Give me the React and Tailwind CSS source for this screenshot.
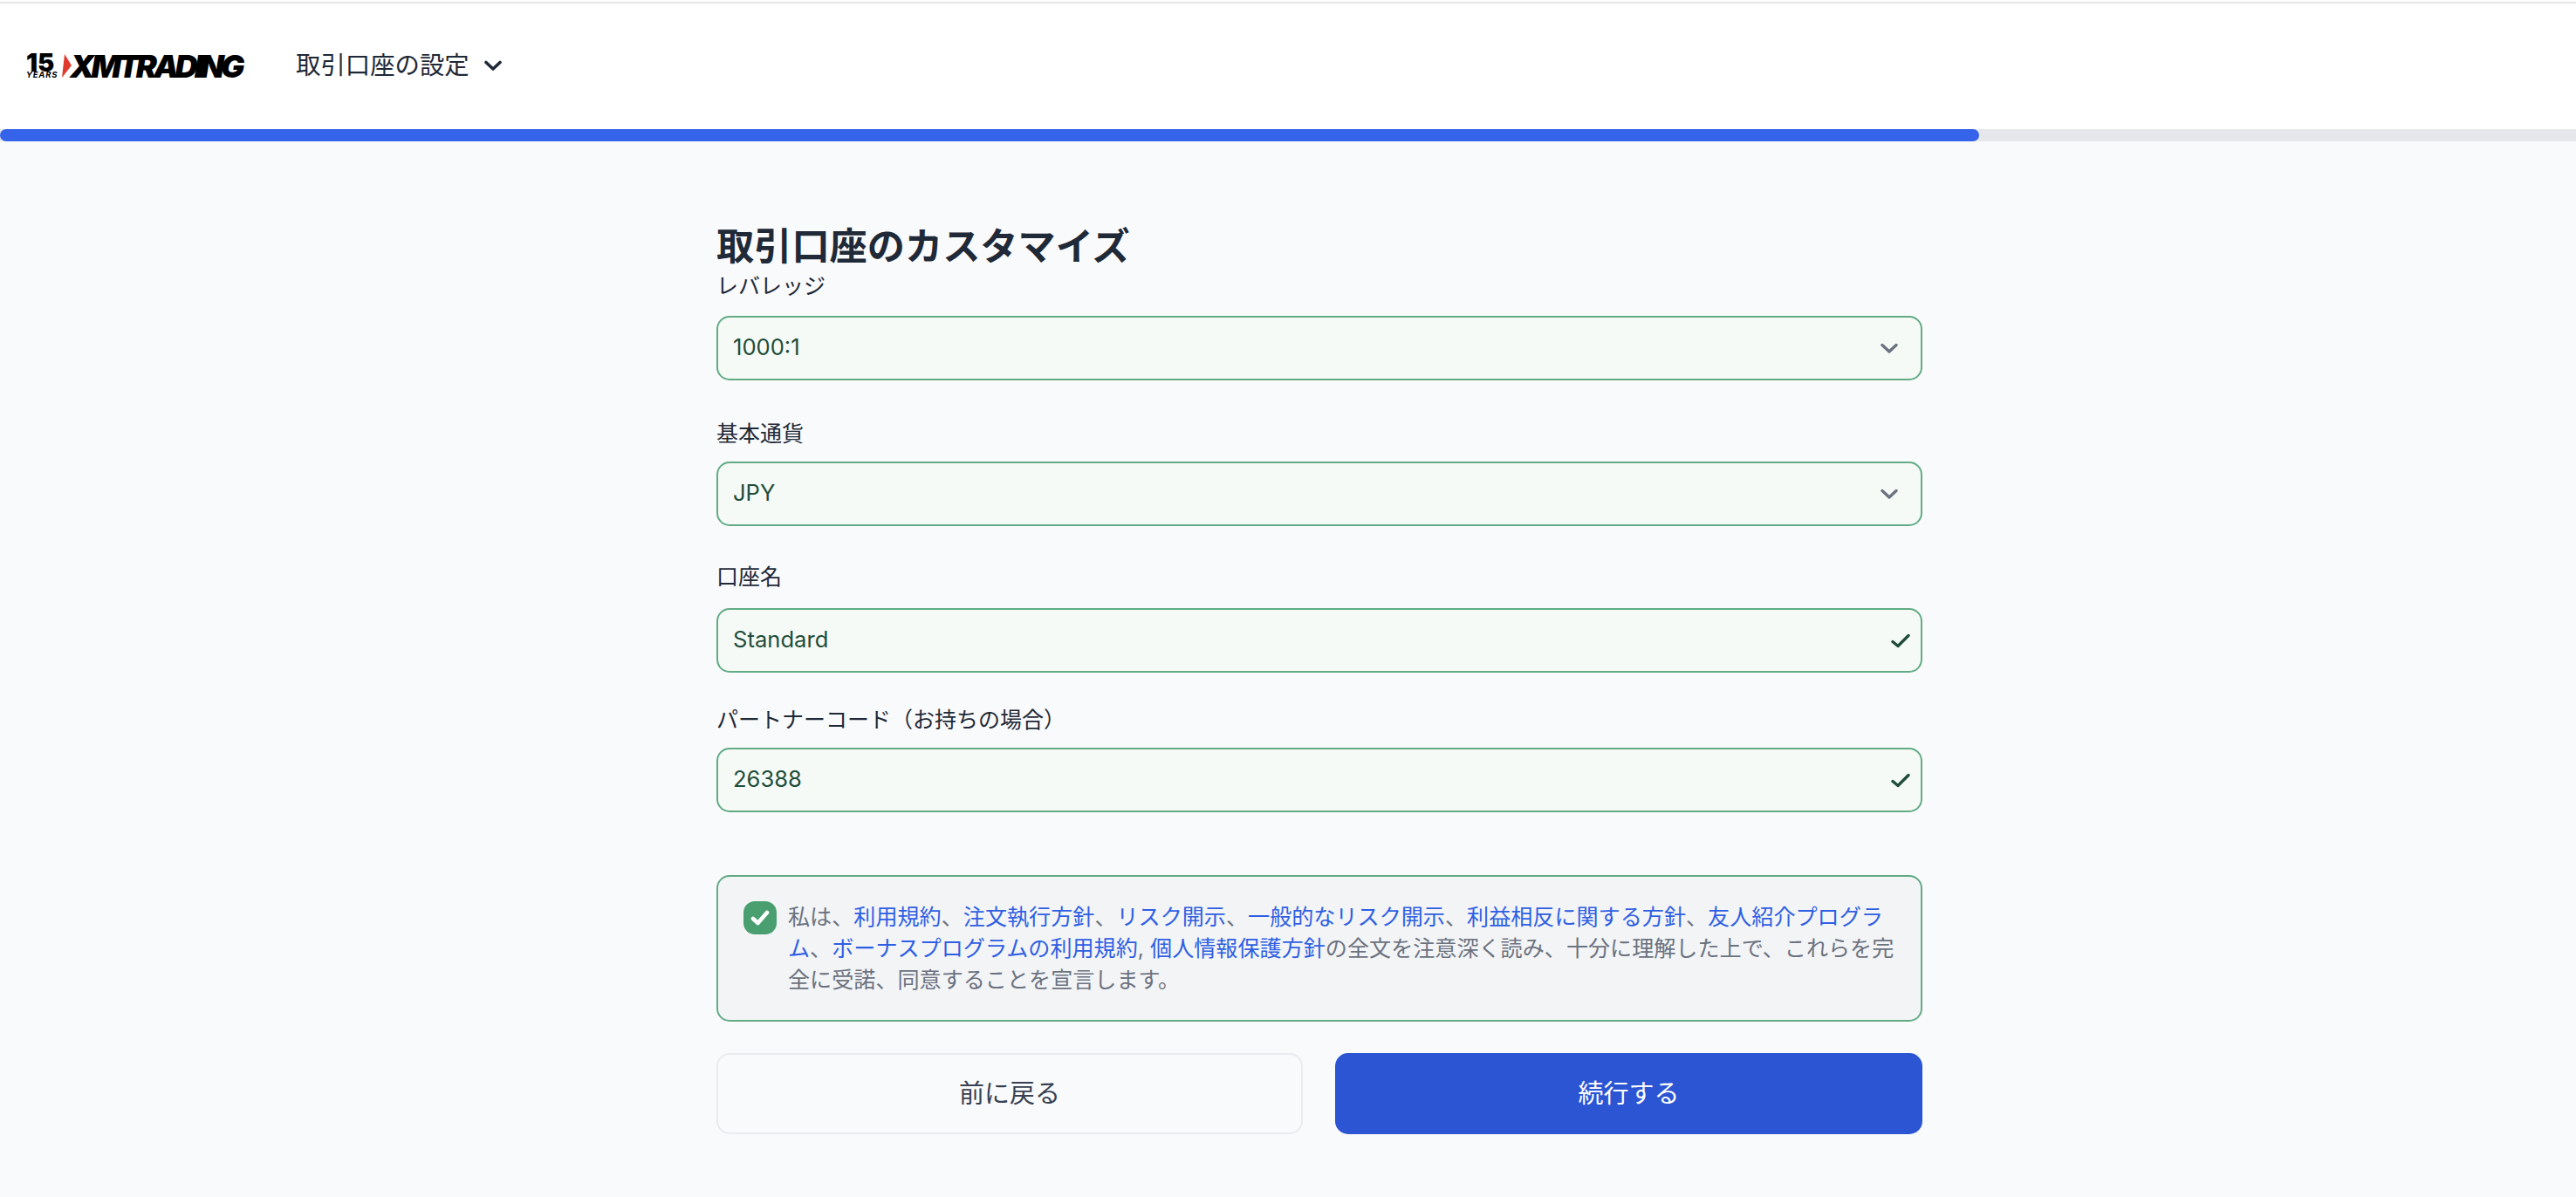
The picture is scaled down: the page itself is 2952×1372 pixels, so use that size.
import React from 'react';

const FONT = "font-['Inter','Noto_Sans_CJK_JP',sans-serif]";

function Chevron() {
  return (
    <svg width="20" height="13" viewBox="0 0 20 13" fill="none" className="text-[#6b7280]">
      <path d="M2 2.5 10 10l8-7.5" stroke="currentColor" strokeWidth="3.4" strokeLinecap="round" strokeLinejoin="round" />
    </svg>
  );
}

function Check() {
  return (
    <svg width="22" height="17" viewBox="0 0 22 17" fill="none" className="text-[#1f4d3a]">
      <path d="M2 9.5 8 14.5 20 2.5" stroke="currentColor" strokeWidth="3.4" strokeLinecap="round" strokeLinejoin="round" />
    </svg>
  );
}

function Field({ label, value, icon, className, labelClass }) {
  return (
    <div className={className}>
      <div className={`h-[34px] leading-[34px] text-[25px] text-[#1f2937] ${labelClass}`}>{label}</div>
      <div className="h-[74px] flex items-center justify-between rounded-[15px] border-2 border-[#62ab85] bg-[#f5faf6] pl-[17px] text-[25.6px] text-[#1f4d3a]">
        <span className="pb-[2px]">{value}</span>
        {icon === 'check' ? (
          <span className="mr-[12px] flex"><Check /></span>
        ) : (
          <span className="mr-[26px] flex"><Chevron /></span>
        )}
      </div>
    </div>
  );
}

function Logo() {
  return (
    <div className="flex items-center ml-[30px] w-[250px] h-[28px] text-black">
      <div className="w-[36px] flex flex-col items-start leading-none">
        <span className="text-[29px] font-black tracking-[0px] h-[20px] leading-[20px]">15</span>
        <span className="text-[9.5px] font-bold italic tracking-[0.8px] h-[8px] leading-[8px]">YEARS</span>
      </div>
      <svg width="11" height="27" viewBox="0 0 11 27" className="ml-[5px] shrink-0">
        <polygon points="3,0 11,13 0,27" fill="#e03a2e" />
      </svg>
      <span className="ml-[-2px] text-[36px] leading-[28px] font-black italic tracking-[-3.9px] whitespace-nowrap">XMTRADING</span>
    </div>
  );
}

function A({ children }) {
  return <a href="#" className="text-[#2f5fe3]">{children}</a>;
}

export default function App() {
  return (
    <div className={`min-h-screen bg-[#f9fafb] ${FONT}`}>
      <header className="h-[148px] bg-white">
        <div className="h-[4px] pt-[2px]"><div className="h-[2px] bg-[#e5e5e5]" /></div>
        <div className="h-[144px] flex items-center pb-[1px]">
          <Logo />
          <div className="ml-[59px] flex items-center text-[28.4px] text-[#1f2937]">
            <span>取引口座の設定</span>
            <svg width="20" height="13" viewBox="0 0 20 13" fill="none" className="ml-[17px]">
              <path d="M2 2.5 10 10l8-7.5" stroke="#1f2937" strokeWidth="3.6" strokeLinecap="round" strokeLinejoin="round" />
            </svg>
          </div>
        </div>
      </header>

      <div className="h-[14px] bg-[#e5e7eb]">
        <div className="h-full w-[2268px] rounded-full bg-[#3563e9]" />
      </div>

      <main className="ml-[821px] w-[1382px] pt-[98px]">
        <h1 className="h-[51px] leading-[45px] text-[43.2px] font-bold text-[#1f2937]">取引口座のカスタマイズ</h1>
        <Field label="レバレッジ" value="1000:1" labelClass="mb-[17px]" />
        <Field label="基本通貨" value="JPY" className="mt-[44px]" labelClass="mb-[15px]" />
        <Field label="口座名" value="Standard" icon="check" className="mt-[41px]" labelClass="mb-[19px]" />
        <Field label="パートナーコード（お持ちの場合）" value="26388" icon="check" className="mt-[37px]" labelClass="mb-[15px]" />

        <div className="mt-[72px] h-[168px] flex rounded-[15px] border-2 border-[#62ab85] bg-[#f3f4f6] pl-[29px] pt-[28px]">
          <div className="w-[38px] h-[38px] shrink-0 rounded-[13px] bg-[#4a9f71] flex items-center justify-center">
            <svg width="22" height="18" viewBox="0 0 22 18" fill="none">
              <path d="M3 10 8.5 15 19 3" stroke="#fff" strokeWidth="4.6" strokeLinecap="round" strokeLinejoin="round" />
            </svg>
          </div>
          <p className="ml-[13px] w-[1278px] text-[25.1px] leading-[36px] text-[#6b7280]">
            私は、<A>利用規約</A>、<A>注文執行方針</A>、<A>リスク開示</A>、<A>一般的なリスク開示</A>、<A>利益相反に関する方針</A>、<A>友人紹介プログラム</A>、<A>ボーナスプログラムの利用規約</A>, <A>個人情報保護方針</A>の全文を注意深く読み、十分に理解した上で、これらを完全に受諾、同意することを宣言します。
          </p>
        </div>

        <div className="mt-[36px] flex gap-[37px]">
          <button className="h-[93px] w-[672px] rounded-[15px] border-2 border-[#e9ebef] text-[29px] text-[#374151]">前に戻る</button>
          <button className="h-[93px] flex-1 rounded-[15px] bg-[#2b55d3] text-[29px] text-white">続行する</button>
        </div>
      </main>
    </div>
  );
}
